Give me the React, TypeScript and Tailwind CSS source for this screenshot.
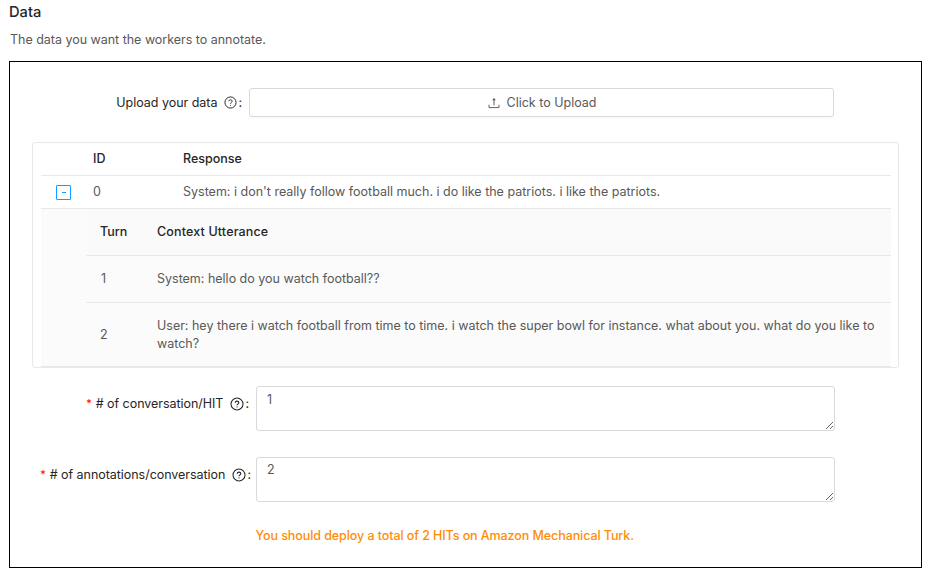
const turns = [
  { turn: 1, text: "System: hello do you watch football??", height: "h-[47px]", number: "pl-px" },
  {
    turn: 2,
    text: "User: hey there i watch football from time to time. i watch the super bowl for instance. what about you. what do you like to watch?",
    height: "h-[64px]",
    number: "",
  },
];

function QuestionIcon({ className }: { className: string }) {
  return (
    <svg viewBox="0 0 14 14" fill="none" stroke="currentColor" strokeWidth="1.05" className={className}>
      <circle cx="7" cy="7" r="6" />
      <path d="M5.2 5.7c0-1 .8-1.6 1.8-1.6s1.8.65 1.8 1.55c0 1.3-1.75 1.3-1.75 2.65" />
      <circle cx="7.05" cy="9.9" r=".55" fill="currentColor" stroke="none" />
    </svg>
  );
}

function UploadIcon() {
  return (
    <svg viewBox="0 0 12 12" fill="none" stroke="currentColor" strokeWidth="0.95" className="size-[12px] shrink-0">
      <path d="M1 7.8v2.8h10V7.8" />
      <path d="M6 8.3V2.2" />
      <path d="M6 .9 4.2 3.2h3.6Z" fill="currentColor" stroke="none" />
    </svg>
  );
}

function Field({ label, value, pad, top }: { label: string; value: string; pad: string; top: string }) {
  return (
    <div className="flex h-[45px]">
      <div className={`flex h-[35px] w-[246px] items-center justify-end text-[#262626] ${pad}`}>
        <span className="mr-[4px] h-[18px] text-[11px] leading-[17px] text-[#ff0000]">*</span>
        <span className="whitespace-nowrap tracking-[-0.04px]">{label}</span>
        <QuestionIcon className="ml-[7px] size-[14px] shrink-0" />
        <span className="ml-px">:</span>
      </div>
      <textarea
        defaultValue={value}
        className={`block h-[45px] w-[579px] resize rounded-[3px] border border-[#d9d9d9] bg-white px-[10px] pb-0 leading-[18px] text-[#595959] outline-none ${top}`}
      />
    </div>
  );
}

export default function App() {
  return (
    <main className="h-[577px] w-[932px] overflow-hidden bg-white pl-[9px] font-['Inter',sans-serif] text-[12.5px] leading-[18px] text-[#595959]">
      <h1 className="h-[31px] pt-[3px] text-[14.7px] font-medium leading-[18px] text-[#262626]">Data</h1>
      <p className="h-[30px] whitespace-nowrap pl-[1px] tracking-[-0.02px]">The data you want the workers to annotate.</p>

      <section className="h-[507px] w-[913px] border border-black">
        <div className="flex pt-[26px]">
          <div className="flex h-[29px] w-[239px] items-center justify-end pr-[7px] text-[#262626]">
            <span className="tracking-[-0.03px]">Upload your data</span>
            <QuestionIcon className="ml-[7px] size-[13px] shrink-0" />
            <span className="ml-px">:</span>
          </div>
          <button className="flex h-[29px] w-[585px] items-center justify-center gap-[7px] rounded-[3px] border border-[#d9d9d9] bg-white pl-px shadow-[0_2px_0_rgba(0,0,0,0.015)]">
            <UploadIcon />
            <span>Click to Upload</span>
          </button>
        </div>

        <div className="ml-[22px] mt-[25px] h-[226px] w-[867px] rounded-[3px] border border-[#e8e8e8] pl-2 pr-[7px]">
          <div className="flex h-[33px] items-center border-b border-[#e8e8e8] font-medium text-[#262626]">
            <span className="ml-[52px] w-[90px]">ID</span>
            <span>Response</span>
          </div>
          <div className="flex h-[33px] items-center border-b border-[#e8e8e8]">
            <span className="ml-[15px] flex size-[15px] items-center justify-center rounded-[1px] border border-[#109fff]">
              <span className="h-px w-1 bg-[#109fff]" />
            </span>
            <span className="ml-[22px] w-[90px]">0</span>
            <span className="whitespace-nowrap">System: i don't really follow football much. i do like the patriots. i like the patriots.</span>
          </div>
          <div className="h-[158px] border-b border-[#e8e8e8] bg-[#fbfbfb] pl-[45px]">
            <div className="flex h-[47px] items-center border-b border-[#e8e8e8] bg-[#fafafa] pl-[14px] font-medium text-[#262626]">
              <span className="w-[57px]">Turn</span>
              <span className="tracking-[0.15px]">Context Utterance</span>
            </div>
            {turns.map((t) => (
              <div key={t.turn} className={`flex items-center border-b border-[#e8e8e8] pl-[14px] last:border-0 ${t.height}`}>
                <span className={`w-[57px] shrink-0 ${t.number}`}>{t.turn}</span>
                <span className="w-[724px] tracking-[-0.006px]">{t.text}</span>
              </div>
            ))}
          </div>
        </div>

        <div className="mt-[18px]">
          <Field label="# of conversation/HIT" value="1" pad="pr-[7px]" top="pt-[4px]" />
        </div>
        <div className="mt-[26px]">
          <Field label="# of annotations/conversation" value="2" pad="pr-[5px]" top="pt-[3px]" />
        </div>
        <p className="ml-[245.5px] mt-[25px] whitespace-nowrap font-medium tracking-[-0.08px] text-[#ff8c05]">
          You should deploy a total of 2 HITs on Amazon Mechanical Turk.
        </p>
      </section>
    </main>
  );
}
